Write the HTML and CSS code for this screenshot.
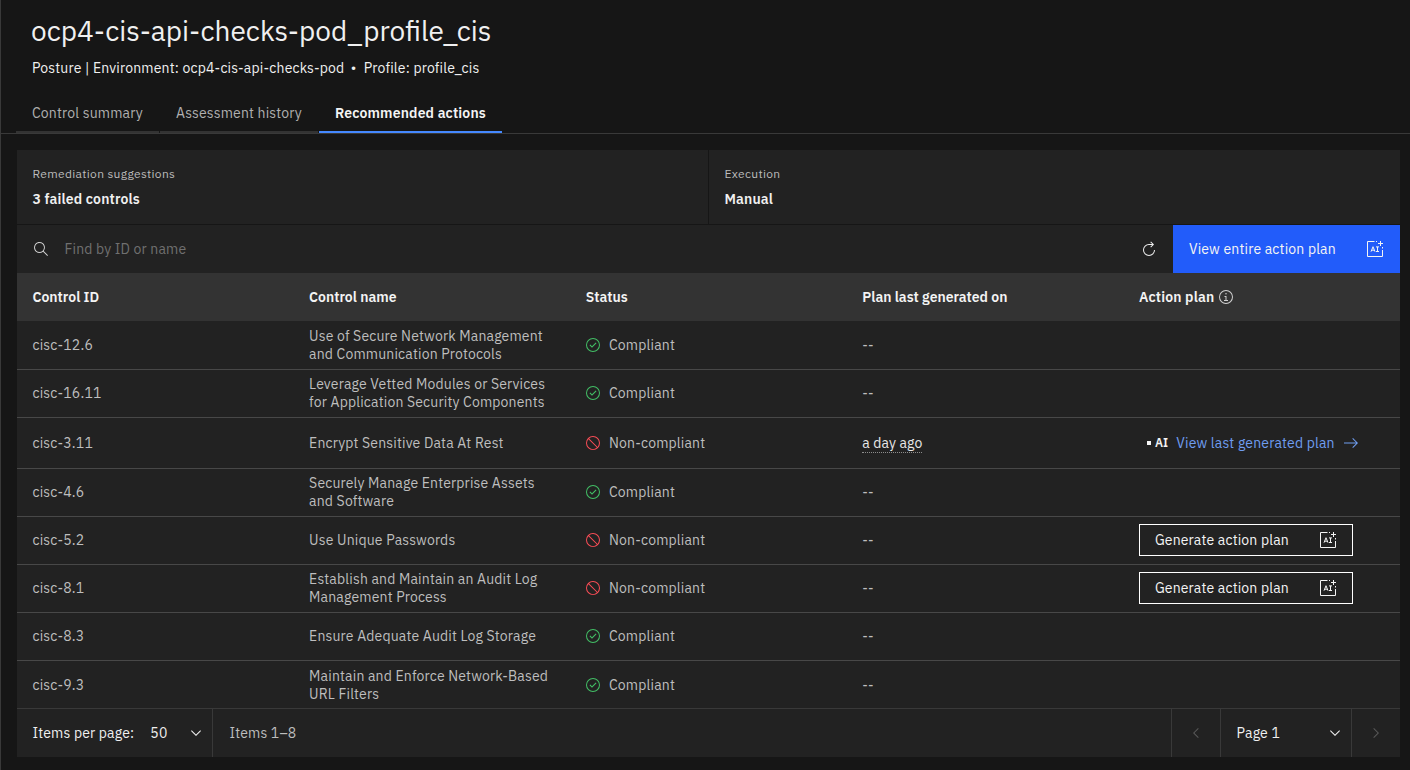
FILE: index.html
```html
<!DOCTYPE html>
<html lang="en">
<head>
<meta charset="utf-8">
<title>ocp4-cis-api-checks-pod_profile_cis</title>
<link rel="stylesheet" href="styles.css">
</head>
<body>
<svg class="sprite" width="0" height="0">
  <symbol id="check" viewBox="0 0 32 32"><path d="M14 21.4l-5-5 1.6-1.4 3.4 3.4 7.4-7.4L23 12.4z"/><path d="M16 2a14 14 0 1 0 14 14A14 14 0 0 0 16 2zm0 26a12 12 0 1 1 12-12 12 12 0 0 1-12 12z"/></symbol>
  <symbol id="error" viewBox="0 0 32 32"><path d="M2 16A14 14 0 1 0 16 2 14 14 0 0 0 2 16zm23.15 7.75L8.25 6.85a12 12 0 0 1 16.9 16.9zM8.24 25.16A12 12 0 0 1 6.84 8.27L23.73 25.16a12 12 0 0 1-15.49 0z"/></symbol>
  <symbol id="down" viewBox="0 0 16 16"><path d="M8 11L3 6l.7-.7L8 9.6l4.3-4.3.7.7z"/></symbol>
  <symbol id="ai" viewBox="0 0 20 20"><g fill="none" stroke="currentColor" stroke-width="1"><path d="M9.5 2.5h-7v15h15v-6.500M15.500 2v5M13 4.500h5"/><path d="M11 2.500h1M17.500 8v1.500" stroke-width="1"/><path d="M6 12.700l2-5 2 5M6.800 11.200h2.400M11 7.900h3M12.500 7.900v4.600M11 12.500h3" stroke-width="1"/></g></symbol>
</svg>
<main class="page">
  <header class="header">
    <h1 class="title">ocp4-cis-api-checks-pod_profile_cis</h1>
    <p class="subtitle">Posture | Environment: ocp4-cis-api-checks-pod <span class="bullet">•</span> Profile: profile_cis</p>
    <nav class="tabs">
      <a class="tab tab-summary">Control summary</a>
      <a class="tab tab-history">Assessment history</a>
      <a class="tab tab-active">Recommended actions</a>
    </nav>
  </header>
  <section class="panel">
    <div class="tiles">
      <div class="tile"><div class="label">Remediation suggestions</div><div class="value">3 failed controls</div></div>
      <div class="tile"><div class="label">Execution</div><div class="value">Manual</div></div>
    </div>
    <div class="toolbar">
      <svg class="icon search-icon" viewBox="0 0 16 16"><path d="M15 14.300L10.700 10c1.900-2.300 1.600-5.800-.7-7.700S4.200.7 2.300 3 .7 8.800 3 10.700c2 1.700 5 1.700 7 0l4.300 4.300.7-.7zM2 6.500C2 4 4 2 6.500 2S11 4 11 6.500 9 11 6.500 11 2 9 2 6.500z"/></svg>
      <span class="placeholder">Find by ID or name</span>
      <svg class="icon refresh" viewBox="0 0 32 32"><path d="M26 18A10 10 0 1 1 16 8h6.200l-3.600 3.600L20 13l6-6-6-6-1.400 1.400L22.200 6H16a12 12 0 1 0 12 12z"/></svg>
      <button class="primary">View entire action plan<svg class="ai-icon"><use href="#ai"/></svg></button>
    </div>
    <div class="row head">
      <div>Control ID</div><div>Control name</div><div>Status</div><div>Plan last generated on</div>
      <div class="info-cell">Action plan<svg class="icon info" viewBox="0 0 32 32"><path d="M17 22v-8h-4v2h2v6h-3v2h8v-2zM16 8a1.500 1.500 0 1 0 1.500 1.500A1.500 1.500 0 0 0 16 8z"/><path d="M16 30a14 14 0 1 1 14-14 14 14 0 0 1-14 14zm0-26a12 12 0 1 0 12 12A12 12 0 0 0 16 4z"/></svg></div>
    </div>
    <div class="row first"><div>cisc-12.6</div><div>Use of Secure Network Management<br>and Communication Protocols</div><div class="status"><svg class="icon ok"><use href="#check"/></svg>Compliant</div><div>--</div><div></div></div>
    <div class="row"><div>cisc-16.11</div><div>Leverage Vetted Modules or Services<br>for Application Security Components</div><div class="status"><svg class="icon ok"><use href="#check"/></svg>Compliant</div><div>--</div><div></div></div>
    <div class="row tall"><div>cisc-3.11</div><div>Encrypt Sensitive Data At Rest</div><div class="status"><svg class="icon bad"><use href="#error"/></svg>Non-compliant</div><div class="ago-cell"><span class="ago">a day ago</span></div><div class="last-plan"><i class="dot"></i><b class="ai-label">AI</b><a class="link">View last generated plan</a><svg class="icon arrow" viewBox="0 0 16 16"><path d="M9.300 3.700L13.100 7.500H1v1h12.100l-3.800 3.800.7.700 5-5-5-5z"/></svg></div></div>
    <div class="row"><div>cisc-4.6</div><div>Securely Manage Enterprise Assets<br>and Software</div><div class="status"><svg class="icon ok"><use href="#check"/></svg>Compliant</div><div>--</div><div></div></div>
    <div class="row"><div>cisc-5.2</div><div>Use Unique Passwords</div><div class="status"><svg class="icon bad"><use href="#error"/></svg>Non-compliant</div><div>--</div><div><button class="generate">Generate action plan<svg class="ai-icon"><use href="#ai"/></svg></button></div></div>
    <div class="row"><div>cisc-8.1</div><div>Establish and Maintain an Audit Log<br>Management Process</div><div class="status"><svg class="icon bad"><use href="#error"/></svg>Non-compliant</div><div>--</div><div><button class="generate">Generate action plan<svg class="ai-icon"><use href="#ai"/></svg></button></div></div>
    <div class="row"><div>cisc-8.3</div><div>Ensure Adequate Audit Log Storage</div><div class="status"><svg class="icon ok"><use href="#check"/></svg>Compliant</div><div>--</div><div></div></div>
    <div class="row last"><div>cisc-9.3</div><div>Maintain and Enforce Network-Based<br>URL Filters</div><div class="status"><svg class="icon ok"><use href="#check"/></svg>Compliant</div><div>--</div><div></div></div>
    <footer class="pagination">
      <div class="page-size"><span class="size-label">Items per page:</span><span>50</span><svg class="icon caret"><use href="#down"/></svg></div>
      <div class="range">Items 1–8</div>
      <div class="step"><svg class="icon prev"><use href="#down"/></svg></div>
      <div class="page-select"><span>Page 1</span><svg class="icon caret"><use href="#down"/></svg></div>
      <div class="step"><svg class="icon next"><use href="#down"/></svg></div>
    </footer>
  </section>
</main>
</body>
</html>
```
FILE: styles.css
```css
* { box-sizing: border-box; }
body { margin: 0; background: #161616; color: #f0f0f0; font: 14px/18px "IBM Plex Sans", Roboto, sans-serif; letter-spacing: .16px; }
.sprite { display: block; height: 0; }
.page { height: 770px; border-left: 1px solid #393939; overflow: hidden; }
.header { height: 134px; border-bottom: 1px solid #393939; display: flex; flex-direction: column; }
.title { margin: 11px 0 0 30px; font-size: 28px; line-height: 40px; font-weight: 400; letter-spacing: 0; }
.subtitle { margin: 8px 0 0 31px; white-space: nowrap; }
.bullet { margin: 0 4px 0 3px; }
.tabs { display: flex; gap: 1px; margin: 16px 0 0 15px; height: 40px; }
.tab { height: 40px; padding: 11px 0 0 16px; border-bottom: 2px solid #333; color: #b0b0b0; white-space: nowrap; }
.tab-summary { width: 143px; }
.tab-history { width: 158px; }
.tab-active { width: 183px; border-color: #4589ff; color: #f4f4f4; font-weight: 600; }
.panel { margin: 16px 10px 0 16px; background: #222; }
.tiles { display: grid; grid-template-columns: 692px 1fr; height: 75px; border-bottom: 1px solid #161616; }
.tile { padding: 15px 15.500px 0; }
.tile:first-child { border-right: 1px solid #161616; }
.label { font-size: 12px; line-height: 18px; letter-spacing: .32px; color: #bcbcbc; }
.value { margin-top: 7px; font-weight: 600; }
.icon { width: 16px; height: 16px; fill: currentColor; flex: none; }
.toolbar { display: flex; align-items: center; height: 48px; padding-left: 16px; }
.search-icon { color: #d0d0d0; }
.placeholder { margin-left: 15.500px; color: #707070; flex: 1; }
.refresh { margin-right: 16px; }
.ai-icon { width: 20px; height: 20px; flex: none; }
button { font: inherit; letter-spacing: inherit; color: #f4f4f4; border-radius: 0; display: flex; align-items: center; justify-content: space-between; white-space: nowrap; }
.primary { width: 227px; height: 48px; padding: 0 15px 0 16px; border: 0; background: #225cfa; }
.row { display: grid; grid-template-columns: repeat(5, 1fr); align-items: center; height: 48px; padding-bottom: 1px; border-bottom: 1px solid #484848; color: #bebebe; }
.row > div { padding-left: 15.500px; white-space: nowrap; }
.head { padding: 0; background: #333; border: 0; color: #f4f4f4; font-weight: 600; letter-spacing: 0; }
.info-cell { display: flex; align-items: center; gap: 4px; letter-spacing: .16px; }
.info { color: #d0d0d0; }
.first { height: 49px; padding: 0; }
.tall { height: 51px; padding: 0; }
.last { height: 47px; padding: 0; border: 0; }
.row > .status { display: flex; align-items: center; gap: 8px; padding-left: 14.800px; }
.ok { color: #42be65; }
.bad { color: #fa4d56; }
.row > .ago-cell { padding-bottom: 1px; letter-spacing: .1px; }
.ago { color: #e8e8e8; border-bottom: 1px dotted #8d8d8d; }
.last-plan { display: flex; align-items: center; }
.dot { width: 4px; height: 4px; margin: 0 4px 0 8px; background: #f4f4f4; }
.ai-label { font-size: 12px; font-weight: 600; color: #f4f4f4; margin-right: 8px; }
.link, .arrow { color: #6f9df0; }
.arrow { margin-left: 8px; }
.generate { width: 214px; height: 32px; padding: 0 14px 0 15px; border: 1px solid #fff; background: transparent; }
.pagination { display: flex; height: 49px; border-top: 1px solid #393939; }
.pagination > div { display: flex; align-items: center; border-right: 1px solid #393939; }
.page-size { width: 196px; padding: 0 8px 0 15.500px; }
.size-label { margin-right: 16px; }
.caret { margin-left: auto; }
.pagination > .range { flex: 1; padding-left: 16.400px; color: #bebebe; }
.step { width: 49px; justify-content: center; color: #595959; }
.pagination > .step:last-child { width: 48px; border: 0; }
.page-select { width: 131px; padding: 0 8px 0 15.500px; }
.prev { transform: rotate(90deg); }
.next { transform: rotate(-90deg); }
```
